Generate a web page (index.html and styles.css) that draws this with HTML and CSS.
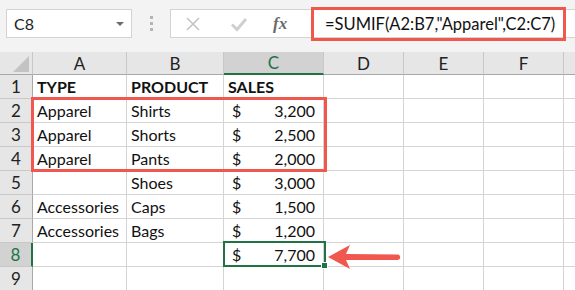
FILE: index.html
```html
<!DOCTYPE html>
<html>
<head>
<meta charset="utf-8">
<link rel="stylesheet" href="styles.css">
</head>
<body>
<div class="app">
  <div class="topbar">
    <div class="namebox"><span class="ref">C8</span><span class="caret"></span></div>
    <div class="grip"><i></i><i></i><i></i></div>
    <div class="formula">
      <div class="fbtns">
        <svg class="ico" width="20" height="20" viewBox="0 0 20 20"><path d="M4 4L16 16M16 4L4 16" stroke="#c4c4c4" stroke-width="1.6" fill="none"/></svg>
        <svg class="ico" width="20" height="20" viewBox="0 0 20 20"><path d="M3 10.5L8 15.5L17 5" stroke="#cfcfcf" stroke-width="3" fill="none"/></svg>
        <span class="fx">fx</span>
      </div>
      <div class="ftext">=SUMIF(A2:B7,"Apparel",C2:C7)</div>
    </div>
  </div>
  <div class="sheet">
    <div class="hd corner"><span class="tri"></span></div>
    <div class="hd">A</div><div class="hd">B</div><div class="hd sel-col">C</div><div class="hd">D</div><div class="hd">E</div><div class="hd">F</div><div class="hd"></div>

    <div class="rh">1</div><div class="c b">TYPE</div><div class="c b">PRODUCT</div><div class="c b">SALES</div><div class="c"></div><div class="c"></div><div class="c"></div><div class="c"></div>
    <div class="rh">2</div><div class="c">Apparel</div><div class="c">Shirts</div><div class="c m"><span>$</span><span>3,200</span></div><div class="c"></div><div class="c"></div><div class="c"></div><div class="c"></div>
    <div class="rh">3</div><div class="c">Apparel</div><div class="c">Shorts</div><div class="c m"><span>$</span><span>2,500</span></div><div class="c"></div><div class="c"></div><div class="c"></div><div class="c"></div>
    <div class="rh">4</div><div class="c">Apparel</div><div class="c">Pants</div><div class="c m"><span>$</span><span>2,000</span></div><div class="c"></div><div class="c"></div><div class="c"></div><div class="c"></div>
    <div class="rh">5</div><div class="c"></div><div class="c">Shoes</div><div class="c m"><span>$</span><span>3,000</span></div><div class="c"></div><div class="c"></div><div class="c"></div><div class="c"></div>
    <div class="rh">6</div><div class="c">Accessories</div><div class="c">Caps</div><div class="c m"><span>$</span><span>1,500</span></div><div class="c"></div><div class="c"></div><div class="c"></div><div class="c"></div>
    <div class="rh">7</div><div class="c">Accessories</div><div class="c">Bags</div><div class="c m"><span>$</span><span>1,200</span></div><div class="c"></div><div class="c"></div><div class="c"></div><div class="c"></div>
    <div class="rh sel-row">8</div><div class="c"></div><div class="c"></div><div class="c m"><span>$</span><span>7,700</span></div><div class="c"></div><div class="c"></div><div class="c"></div><div class="c"></div>
    <div class="rh">9</div><div class="c"></div><div class="c"></div><div class="c"></div><div class="c"></div><div class="c"></div><div class="c"></div><div class="c"></div>
  </div>

  <div class="hl hl-formula"></div>
  <div class="hl hl-range"></div>
  <div class="active"><span class="handle"></span></div>
  <svg class="arrow" width="74" height="26" viewBox="0 0 74 26"><path d="M0 13L22 1L18 10L70 10.5A2.8 2.8 0 0 1 70 16L18 16L22 25Z" fill="#f0584f"/></svg>
</div>
</body>
</html>
```

FILE: styles.css
```css
html, body { margin: 0; padding: 0; }
body {
  width: 575px;
  height: 290px;
  overflow: hidden;
  background: #fff;
  font-family: Lato, "Open Sans", "Liberation Sans", sans-serif;
}
.app { position: relative; width: 575px; height: 290px; overflow: hidden; }

.topbar {
  height: 52px;
  background: #f3f3f3;
  display: flex;
  align-items: flex-start;
  padding-top: 9px;
  box-sizing: border-box;
}
.namebox {
  margin-left: 6px;
  width: 126px;
  height: 29px;
  box-sizing: border-box;
  background: #fff;
  border: 1px solid #d4d4d4;
  display: flex;
  align-items: center;
  justify-content: space-between;
  padding: 0 7px 0 7px;
}
.ref { font-size: 16px; color: #222; }
.caret {
  width: 0; height: 0;
  border-left: 4px solid transparent;
  border-right: 4px solid transparent;
  border-top: 4px solid #6a6a6a;
}
.grip {
  width: 38px;
  height: 29px;
  display: flex;
  flex-direction: column;
  align-items: center;
  justify-content: center;
  gap: 3px;
}
.grip i { display: block; width: 3px; height: 3px; background: #b5b5b5; }
.formula {
  flex: 1;
  height: 29px;
  background: #fff;
  border: 1px solid #d4d4d4;
  border-right: none;
  box-sizing: border-box;
  display: flex;
  align-items: center;
}
.fbtns {
  width: 140px;
  display: flex;
  align-items: center;
  padding-left: 12px;
  gap: 26px;
}
.fx {
  font-family: "Liberation Serif", serif;
  font-style: italic;
  font-weight: bold;
  font-size: 17px;
  color: #6b6b6b;
  margin-left: -2px;
}
.ftext {
  font-size: 16.5px;
  color: #111;
  padding-left: 2px;
  white-space: nowrap;
}

.sheet {
  display: grid;
  grid-template-columns: 33px 94px 97px 100px 80px 80px 80px 80px;
  grid-template-rows: 23px repeat(9, 24px);
  font-size: 16px;
  color: #111;
}
.hd {
  background: #e6e6e6;
  border-right: 1px solid #c8c8c8;
  border-bottom: 1px solid #a8a8a8;
  box-sizing: border-box;
  display: flex;
  align-items: center;
  justify-content: center;
  font-size: 17px;
  color: #222;
}
.corner { position: relative; }
.tri {
  position: absolute;
  right: 3px;
  bottom: 2px;
  width: 0; height: 0;
  border-left: 16px solid transparent;
  border-bottom: 16px solid #c3c3c3;
}
.sel-col {
  background: #d2d2d2;
  color: #217346;
  border-bottom: 2px solid #217346;
}
.rh {
  background: #e6e6e6;
  border-right: 1px solid #a8a8a8;
  border-bottom: 1px solid #c8c8c8;
  box-sizing: border-box;
  display: flex;
  align-items: center;
  justify-content: center;
  font-size: 17px;
  color: #222;
}
.sel-row {
  background: #d2d2d2;
  color: #217346;
  border-right: 2px solid #217346;
}
.c {
  border-right: 1px solid #d4d4d4;
  border-bottom: 1px solid #d4d4d4;
  box-sizing: border-box;
  display: flex;
  align-items: center;
  padding: 0 4px;
  white-space: nowrap;
  overflow: visible;
}
.b { font-weight: bold; }
.m { justify-content: space-between; padding: 0 8px 0 8px; }

.hl { position: absolute; border: 3px solid #f0584f; box-sizing: border-box; pointer-events: none; }
.hl-formula { left: 311px; top: 7px; width: 255px; height: 34px; }
.hl-range { left: 31px; top: 97px; width: 296px; height: 75px; }
.active {
  position: absolute;
  left: 223px; top: 241px;
  width: 103px; height: 26px;
  border: 2px solid #217346;
  box-sizing: border-box;
}
.handle {
  position: absolute;
  right: -4px; bottom: -4px;
  width: 5px; height: 5px;
  background: #217346;
  border: 1px solid #fff;
}
.arrow { position: absolute; left: 328px; top: 244px; }
```
